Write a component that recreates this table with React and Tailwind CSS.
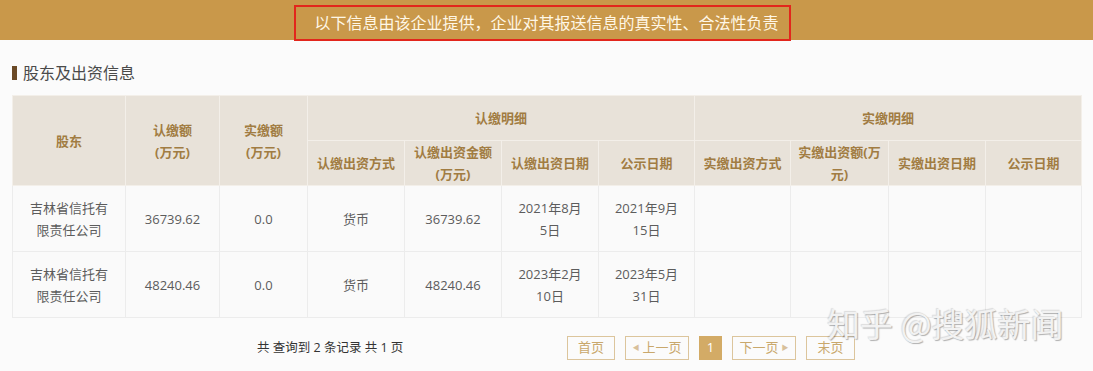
import React from 'react';

const cols = [113, 94, 88, 97, 97, 97, 96, 96, 98, 97, 96];

const rows = [
  { name: ['吉林省信托有', '限责任公司'], sub: '36739.62', paid: '0.0', way: '货币', amt: '36739.62', date: ['2021年8月', '5日'], pub: ['2021年9月', '15日'] },
  { name: ['吉林省信托有', '限责任公司'], sub: '48240.46', paid: '0.0', way: '货币', amt: '48240.46', date: ['2023年2月', '10日'], pub: ['2023年5月', '31日'] },
];

const th = 'border border-[#f3efe9] bg-[#e8e2d9] text-[#a17c42] font-bold text-[13px] leading-[22px] text-center align-middle px-1';
const td = 'border border-[#ececec] bg-[#fafafa] text-[#5c5c5c] text-[13px] leading-[22px] text-center align-middle px-1';

const Lines = ({ lines }) => (
  <>
    {lines.map((l, i) => (
      <div key={i} className="whitespace-nowrap">{l}</div>
    ))}
  </>
);

const PageBtn = ({ children, className = '' }) => (
  <div className={`h-6 flex items-center justify-center border border-[#dcc59c] text-[#c9a86c] text-[13px] ${className}`}>
    {children}
  </div>
);

export default function App() {
  return (
    <div className="relative min-h-[371px] bg-[#fbfbfb] font-['Open_Sans','Noto_Sans_CJK_SC',sans-serif] overflow-hidden">
      {/* notice banner */}
      <div className="h-10 bg-[#c9984a] flex justify-center pt-[5px]">
        <div className="h-[36px] border-2 border-[#e2261c] pl-[18px] pr-[10px] flex items-center text-[16px] text-[#fff7e6] whitespace-nowrap ml-[-8px]">
          以下信息由该企业提供，企业对其报送信息的真实性、合法性负责
        </div>
      </div>

      <div className="px-3">
        {/* section title */}
        <div className="mt-[22px] mb-[11px] flex items-center h-[22px]">
          <div className="w-[5px] h-[14px] bg-[#6b4a26]" />
          <div className="ml-[6px] text-[16px] text-[#4a4a4a]">股东及出资信息</div>
        </div>

        <table className="table-fixed border-collapse w-[1069px]">
          <colgroup>
            {cols.map((w, i) => (
              <col key={i} style={{ width: w }} />
            ))}
          </colgroup>
          <thead>
            <tr className="h-[45px]">
              <th rowSpan={2} className={th}>股东</th>
              <th rowSpan={2} className={th}><Lines lines={['认缴额', '(万元)']} /></th>
              <th rowSpan={2} className={th}><Lines lines={['实缴额', '(万元)']} /></th>
              <th colSpan={4} className={th}>认缴明细</th>
              <th colSpan={4} className={th}>实缴明细</th>
            </tr>
            <tr className="h-[43px]">
              <th className={th}>认缴出资方式</th>
              <th className={th}><Lines lines={['认缴出资金额', '(万元)']} /></th>
              <th className={th}>认缴出资日期</th>
              <th className={th}>公示日期</th>
              <th className={th}>实缴出资方式</th>
              <th className={th}><Lines lines={['实缴出资额(万', '元)']} /></th>
              <th className={th}>实缴出资日期</th>
              <th className={th}>公示日期</th>
            </tr>
          </thead>
          <tbody>
            {rows.map((r, i) => (
              <tr key={i} className="h-[66px]">
                <td className={td}><Lines lines={r.name} /></td>
                <td className={td}>{r.sub}</td>
                <td className={td}>{r.paid}</td>
                <td className={td}>{r.way}</td>
                <td className={td}>{r.amt}</td>
                <td className={td}><Lines lines={r.date} /></td>
                <td className={td}><Lines lines={r.pub} /></td>
                <td className={td}></td>
                <td className={td}></td>
                <td className={td}></td>
                <td className={td}></td>
              </tr>
            ))}
          </tbody>
        </table>

        {/* pagination */}
        <div className="mt-[18px] flex items-center h-6">
          <div className="ml-[245px] text-[12.5px] text-[#333] whitespace-nowrap">共 查询到 2 条记录 共 1 页</div>
          <div className="ml-auto mr-[226px] flex items-center gap-[10px]">
            <PageBtn className="w-[48px]">首页</PageBtn>
            <PageBtn className="w-[64px]"><span className="text-[7px] mr-[3px] text-[#d8c09a]">◀</span>上一页</PageBtn>
            <div className="w-[23px] h-6 flex items-center justify-center bg-[#d3ab66] text-white text-[13px]">1</div>
            <PageBtn className="w-[64px]">下一页<span className="text-[7px] ml-[3px] text-[#d8c09a]">▶</span></PageBtn>
            <PageBtn className="w-[49px]">末页</PageBtn>
          </div>
        </div>
      </div>

      {/* watermark */}
      <div className="absolute left-[827px] top-[303px] text-[33px] leading-[40px] text-[#f2f2f2] whitespace-nowrap font-['Noto_Sans_CJK_SC',sans-serif] [text-shadow:1px_1px_1px_rgba(0,0,0,0.3),-1px_-1px_1px_rgba(0,0,0,0.12)]">
        知乎 @搜狐新闻
      </div>
    </div>
  );
}
